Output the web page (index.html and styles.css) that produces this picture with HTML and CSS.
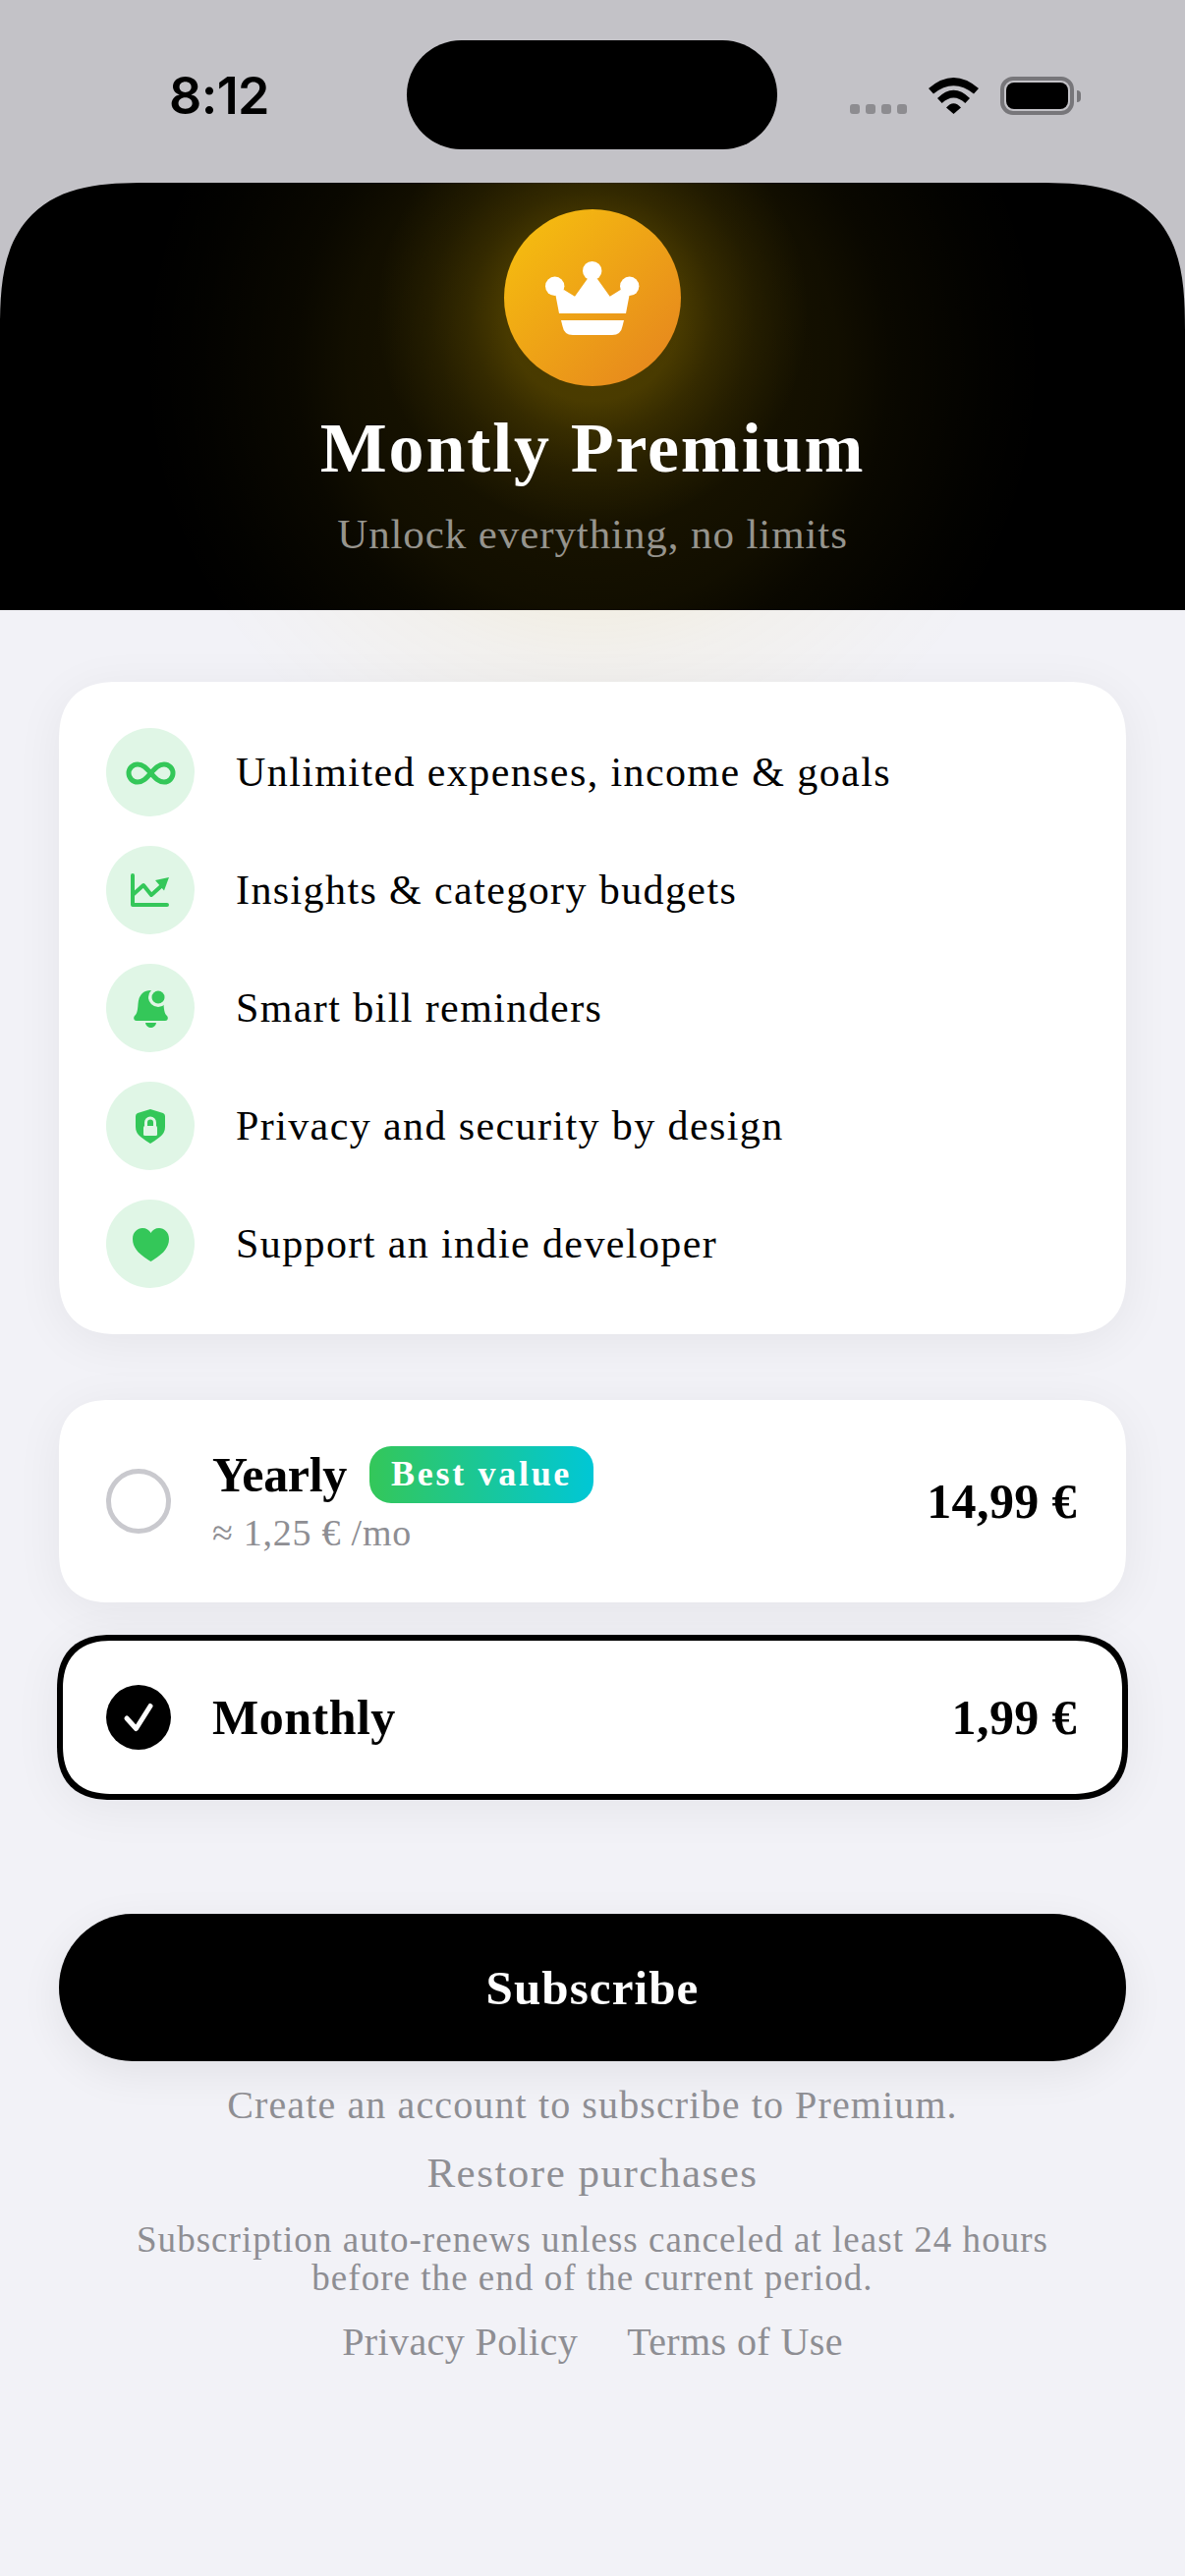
FILE: index.html
```html
<!DOCTYPE html>
<html lang="en">
<head>
<meta charset="utf-8">
<title>Montly Premium</title>
<link rel="stylesheet" href="styles.css">
</head>
<body>
<div class="screen">
  <header class="top">
    <div class="status">
      <span class="time">8:12</span>
      <div class="island"></div>
      <div class="status-right">
        <div class="dots"><i></i><i></i><i></i><i></i></div>
        <svg class="wifi" width="51" height="37" viewBox="0 0 51 37"><path d="M0 11Q25.5-11 51 11L46 16.5Q25.5 0 5 16.5Z"/><path d="M9 21Q25.5 4.5 42 21L37.3 26Q25.5 15 13.7 26Z"/><path d="M18 30.5Q25.5 22 33 30.5L25.5 37Z"/></svg>
        <div class="battery"><div class="battery-fill"></div></div>
        <div class="battery-tip"></div>
      </div>
    </div>
    <div class="hero">
      <div class="glow"></div>
      <div class="hero-content">
        <div class="coin">
          <svg width="180" height="180" viewBox="0 0 180 180" fill="#fff">
            <circle cx="89.7" cy="62.7" r="9.7"/><circle cx="51.7" cy="78.3" r="9.7"/><circle cx="127.7" cy="78.3" r="9.7"/>
            <path d="M52 85L56 106H124L128 85L118.5 82L107.7 88.7L95 71H84.7L72 88.7L61 82Z"/>
            <path d="M58 113H122L120.5 119Q119 128 110 128H70Q61 128 59.5 119Z"/>
          </svg>
        </div>
        <h1 class="title">Montly Premium</h1>
        <p class="subtitle">Unlock everything, no limits</p>
      </div>
    </div>
  </header>
  <main class="main">
    <section class="card features">
      <div class="feature">
        <div class="feature-icon"><svg width="90" height="90" viewBox="0 0 90 90"><path class="line" d="M45.5 46c-4.5-5-8-9-13.5-9a9 9 0 0 0 0 18c5.500 0 9-4 13.500-9s8-9 13.500-9a9 9 0 0 1 0 18c-5.500 0-9-4-13.500-9z"/></svg></div>
        <span class="feature-text">Unlimited expenses, income &amp; goals</span>
      </div>
      <div class="feature">
        <div class="feature-icon"><svg width="90" height="90" viewBox="0 0 90 90"><path class="line thin" d="M27 30V60H62"/><path class="line thin" d="M28 49L38 40L46 50L56 41"/><path class="solid" d="M50 35L64 32L59 45.500Z"/></svg></div>
        <span class="feature-text">Insights &amp; category budgets</span>
      </div>
      <div class="feature">
        <div class="feature-icon"><svg width="90" height="90" viewBox="0 0 90 90"><path class="solid" d="M45.500 27C37 27 33 33 32.500 41C32 49 31 51 29 53C27.500 54.500 28 58 31 58H60C63 58 63.500 54.500 62 53C60 51 59 49 58.500 41C58 33 54 27 45.500 27Z"/><path class="solid" d="M40 60H51C50.500 63.500 48 65 45.500 65C43 65 40.500 63.500 40 60Z"/><circle class="cut" cx="53" cy="34" r="10"/><circle class="solid" cx="53" cy="34" r="6.500"/></svg></div>
        <span class="feature-text">Smart bill reminders</span>
      </div>
      <div class="feature">
        <div class="feature-icon"><svg width="90" height="90" viewBox="0 0 90 90"><path class="solid" d="M45 28L58 32Q60 33 60 35V46Q60 52 55 56Q50 60 45 63Q40 60 35 56Q30 52 30 46V35Q30 33 32 32Z"/><rect class="cut" x="38" y="45" width="14" height="10" rx="1.500"/><path class="shackle" d="M40.500 46V41.500a4.500 4.500 0 0 1 9 0V46"/></svg></div>
        <span class="feature-text">Privacy and security by design</span>
      </div>
      <div class="feature">
        <div class="feature-icon"><svg width="90" height="90" viewBox="0 0 90 90"><path class="solid" d="M45.500 63C38 58 27 52 27 40C27 33 32 29 37 29C41 29 44 31 45.500 34C47 31 50 29 54 29C59 29 64 33 64 40C64 52 53 58 45.500 63Z"/></svg></div>
        <span class="feature-text">Support an indie developer</span>
      </div>
    </section>
    <section class="plans">
      <div class="card plan plan-yearly">
        <div class="radio"></div>
        <div class="plan-info">
          <div class="plan-head"><span class="plan-name">Yearly</span><span class="badge">Best value</span></div>
          <div class="plan-sub">≈ 1,25 € /mo</div>
        </div>
        <span class="price">14,99 €</span>
      </div>
      <div class="card plan plan-monthly">
        <div class="radio radio-on"><svg width="66" height="66" viewBox="0 0 66 66"><path d="M21 34L30.500 44.500L45 21.500" fill="none" stroke="#fff" stroke-width="5" stroke-linecap="round" stroke-linejoin="round"/></svg></div>
        <div class="plan-info"><span class="plan-name name-monthly">Monthly</span></div>
        <span class="price price-monthly">1,99 €</span>
      </div>
    </section>
    <button class="subscribe" type="button">Subscribe</button>
    <p class="note">Create an account to subscribe to Premium.</p>
    <p class="restore">Restore purchases</p>
    <p class="legal">Subscription auto-renews unless canceled at least 24 hours<br>before the end of the current period.</p>
    <div class="links"><span class="link-privacy">Privacy Policy</span><span class="link-terms">Terms of Use</span></div>
  </main>
</div>
</body>
</html>
```

FILE: styles.css
```css
* { box-sizing: border-box; }
html, body { margin: 0; padding: 0; }
body { background: #f2f2f7; font-family: "Liberation Serif", "Times New Roman", serif; color: #000; }
.screen { width: 1206px; height: 2622px; overflow: hidden; background: #f2f2f7; }

.top { background: #c3c2c7; position: relative; }
.status { position: relative; height: 186px; display: flex; justify-content: space-between; padding: 70px 106px 0 172px; }
.time { font-family: Inter, "Liberation Sans", sans-serif; font-weight: 600; font-size: 52px; line-height: 56px; letter-spacing: -.6px; height: 56px; }
.island { position: absolute; left: 414px; top: 41px; width: 377px; height: 111px; border-radius: 56px; background: #000; }
.status-right { display: flex; align-items: flex-start; padding-top: 8px; }
.dots { display: flex; gap: 6px; margin-top: 28px; margin-right: 22px; }
.dots i { display: block; width: 10px; height: 10px; border-radius: 3px; background: #8d8c90; }
.wifi { fill: #000; margin-top: 1px; margin-right: 22px; }
.battery { width: 75px; height: 39px; border: 4px solid #77767a; border-radius: 13px; padding: 2px; }
.battery-fill { width: 100%; height: 100%; background: #000; border-radius: 8px; }
.battery-tip { width: 4px; height: 12px; margin: 14px 0 0 3px; background: #77767a; border-radius: 0 4px 4px 0; }

.hero { position: relative; height: 435px; background: #000; border-radius: 150px 150px 0 0; corner-shape: superellipse(1.5); }
.glow { position: absolute; left: 0; right: 0; top: 0; height: 508px; border-radius: 150px 150px 0 0; corner-shape: superellipse(1.5); background:
  radial-gradient(circle 220px at 603px 132px, rgba(255,204,0,.2) 90px, rgba(255,204,0,.12) 125px, rgba(255,204,0,.06) 165px, rgba(255,204,0,0) 220px),
  radial-gradient(circle 460px at 603px 184px, rgba(255,204,0,.12) 0, rgba(255,204,0,.085) 180px, rgba(255,204,0,.07) 250px, rgba(255,204,0,.04) 304px, rgba(255,204,0,.01) 400px, rgba(255,204,0,0) 460px); }
.hero-content { position: relative; display: flex; flex-direction: column; align-items: center; padding-top: 27px; }
.coin { width: 180px; height: 180px; border-radius: 50%; background: linear-gradient(135deg, #f7c20e, #e5821f); }
.coin svg { display: block; }
.title { margin: 23px 0 0; color: #fff; font-size: 72px; line-height: 80px; font-weight: 700; letter-spacing: 1.85px; }
.subtitle { margin: 24px 0 0; color: #96948d; font-size: 43px; line-height: 48px; letter-spacing: .9px; }

.main { position: relative; padding: 73px 60px 0; display: flex; flex-direction: column; align-items: stretch; }
.card { background: #fff; box-shadow: 0 8px 50px rgba(0,0,0,.06); }
.features { border-radius: 60px; corner-shape: superellipse(1.3); padding: 47px 48px; display: flex; flex-direction: column; gap: 30px; }
.feature { display: flex; align-items: center; gap: 42px; height: 90px; }
.feature-icon { width: 90px; height: 90px; border-radius: 50%; background: #e0f6e6; }
.feature-icon svg { display: block; }
.feature-text { font-size: 42px; line-height: 46px; letter-spacing: 1.4px; }
.line { fill: none; stroke: #34c759; stroke-width: 5; stroke-linecap: round; stroke-linejoin: round; }
.thin { stroke-width: 4; }
.solid { fill: #34c759; }
.cut { fill: #e0f6e6; }
.shackle { fill: none; stroke: #e0f6e6; stroke-width: 3; }

.plans { margin-top: 67px; display: flex; flex-direction: column; gap: 33px; }
.plan { display: flex; align-items: center; padding: 0 50px 0 48px; border-radius: 52px; corner-shape: superellipse(1.3); }
.plan-yearly { height: 206px; }
.plan-monthly { height: 168px; margin: 0 -2px; padding: 0 46px 0 44px; border: 6px solid #000; border-radius: 56px; }
.radio { width: 66px; height: 66px; border-radius: 50%; corner-shape: round; border: 5px solid #c9c9ce; flex: none; }
.radio-on { border: 0; background: #000; }
.radio-on svg { display: block; }
.plan-info { margin-left: 42px; flex: 1; }
.plan-head { display: flex; align-items: center; margin-top: -2px; }
.plan-name { font-size: 50px; line-height: 58px; font-weight: 700; letter-spacing: -.3px; }
.name-monthly { letter-spacing: .5px; }
.badge { margin-left: 23px; height: 58px; padding: 0 22px; border-radius: 22px; background: linear-gradient(90deg, #34c759, #00c7d6); color: #fff; font-size: 36px; line-height: 56px; font-weight: 700; letter-spacing: 2.7px; }
.plan-sub { font-size: 38px; line-height: 44px; color: #8e8e93; margin-top: 8px; letter-spacing: .75px; }
.price { font-size: 50px; line-height: 56px; font-weight: 700; letter-spacing: .4px; }

.subscribe { margin-top: 116px; height: 150px; border: 0; border-radius: 75px; background: #000; color: #fff; font-family: inherit; font-size: 49px; font-weight: 700; box-shadow: 0 12px 44px rgba(0,0,0,.07); letter-spacing: 1.1px; }
.note, .restore, .legal { margin: 0; text-align: center; color: #8e8e93; }
.note { margin-top: 22px; font-size: 40px; line-height: 46px; letter-spacing: 1.12px; }
.restore { margin-top: 22px; font-size: 43px; line-height: 48px; letter-spacing: 1.5px; }
.legal { margin-top: 24px; font-size: 37px; line-height: 39px; letter-spacing: 1.03px; }
.links { margin-top: 23px; display: flex; justify-content: center; gap: 50px; color: #8e8e93; font-size: 40px; line-height: 46px; letter-spacing: .4px; }
```
